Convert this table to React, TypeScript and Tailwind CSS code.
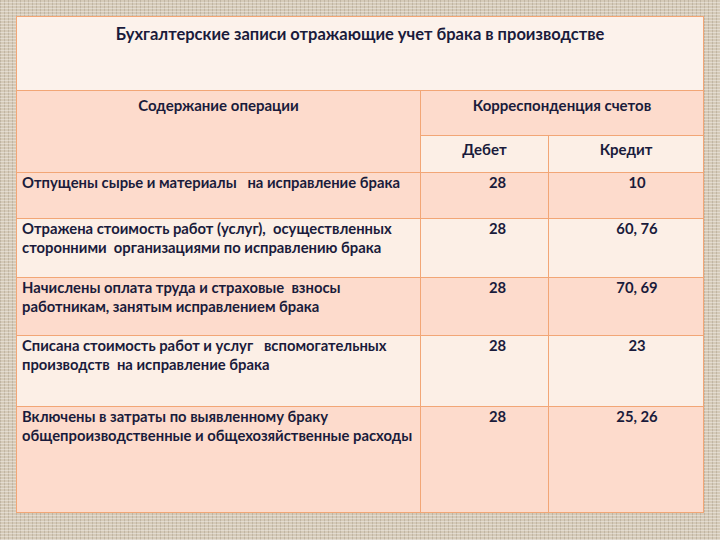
import React from "react";

const rows = [
  { text: ["Отпущены сырье и материалы   на исправление брака"], d: "28", k: "10", h: "h-[46px]", pink: true },
  { text: ["Отражена стоимость работ (услуг),  осуществленных", "сторонними  организациями по исправлению брака"], d: "28", k: "60, 76", h: "h-[59px]", pink: false },
  { text: ["Начислены оплата труда и страховые  взносы", "работникам, занятым исправлением брака"], d: "28", k: "70, 69", h: "h-[58px]", pink: true },
  { text: ["Списана стоимость работ и услуг   вспомогательных", "производств  на исправление брака"], d: "28", k: "23", h: "h-[71px]", pink: false },
  { text: ["Включены в затраты по выявленному браку", "общепроизводственные и общехозяйственные расходы"], d: "28", k: "25, 26", h: "h-[105px]", pink: true },
];

export default function App() {
  return (
    <div
      className="w-[720px] h-[540px] overflow-hidden bg-[#d5cab8] bg-[image:repeating-linear-gradient(0deg,rgba(255,255,255,0.35)_0px,rgba(255,255,255,0.35)_1px,transparent_1px,transparent_3px),repeating-linear-gradient(90deg,rgba(110,95,75,0.2)_0px,rgba(110,95,75,0.2)_1px,transparent_1px,transparent_4px)] pt-[16px] pl-[16px]"
      style={{ fontFamily: "Lato, 'Noto Sans', sans-serif" }}
    >
      <div className="w-[688px] border border-[#f2a676] text-[#1a1b3b] font-bold text-[14.8px] leading-[19px] whitespace-pre">
        <div className="h-[74px] bg-[#fcf2eb] border-b border-[#f2a676] flex justify-center pt-[8px] text-[16.5px]">
          Бухгалтерские записи отражающие учет брака в производстве
        </div>
        <div className="grid grid-cols-[404px_128px_1fr]">
          <div className="row-span-2 bg-[#fddbcc] border-r border-b border-[#f2a676] flex justify-center pt-[5px] text-[15px]">
            Содержание операции
          </div>
          <div className="col-span-2 h-[45px] bg-[#fddbcc] border-b border-[#f2a676] flex justify-center pt-[5px] text-[15px]">
            Корреспонденция счетов
          </div>
          <div className="h-[37px] bg-[#fcefe6] border-r border-b border-[#f2a676] flex justify-center pt-[4px] text-[15px]">
            Дебет
          </div>
          <div className="h-[37px] bg-[#fcefe6] border-b border-[#f2a676] flex justify-center pt-[4px] text-[15px]">
            Кредит
          </div>
          {rows.map((r, i) => {
            const bg = r.pink ? "bg-[#fddbcc]" : "bg-[#fcefe6]";
            const bb = i < rows.length - 1 ? "border-b" : "";
            return (
              <React.Fragment key={i}>
                <div className={`${r.h} ${bg} ${bb} border-r border-[#f2a676] pl-[5px] pt-[0px] flex flex-col`}>
                  {r.text.map((t, j) => (
                    <span key={j}>{t}</span>
                  ))}
                </div>
                <div className={`${r.h} ${bg} ${bb} border-r border-[#f2a676] pl-[26px] pt-[0px] text-center`}>
                  {r.d}
                </div>
                <div className={`${r.h} ${bg} ${bb} border-[#f2a676] pl-[22px] pt-[0px] text-center`}>
                  {r.k}
                </div>
              </React.Fragment>
            );
          })}
        </div>
      </div>
    </div>
  );
}
